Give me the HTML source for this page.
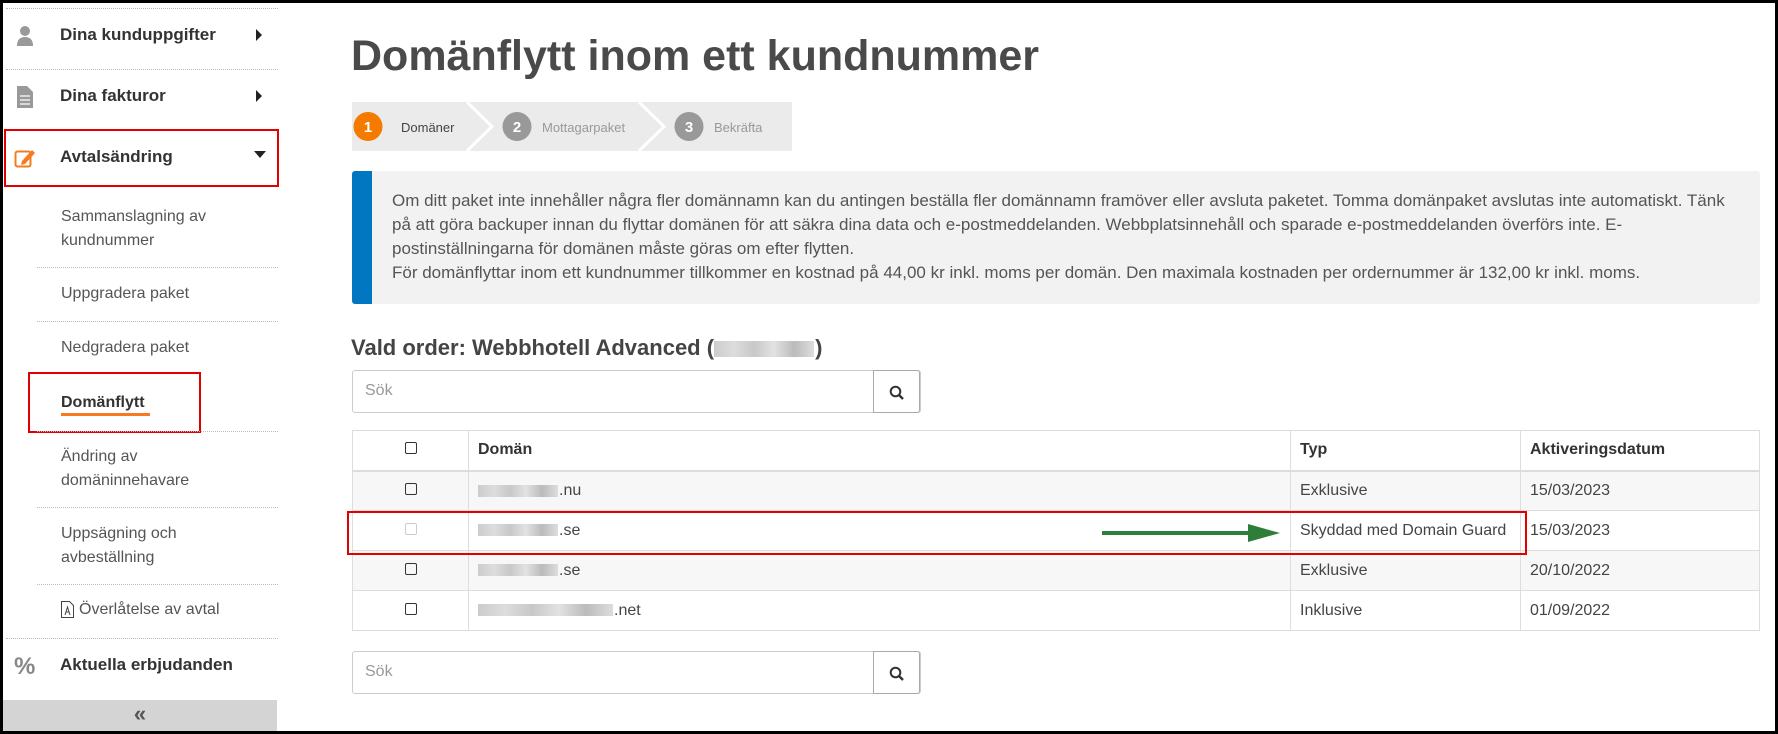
<!DOCTYPE html>
<html><head><meta charset="utf-8"><style>
*{box-sizing:border-box;margin:0;padding:0}
body{width:1778px;height:734px;overflow:hidden;background:#fff;font-family:"Liberation Sans",sans-serif;color:#444;position:relative}
.frame{position:absolute;left:0;top:0;width:1778px;height:734px;border:3px solid #000;z-index:10;pointer-events:none}
.abs{position:absolute}
.side .main{position:absolute;left:60px;font-size:17px;font-weight:bold;color:#333}
.side .sub{position:absolute;left:61px;font-size:16px;color:#555;line-height:24px}
.sep{position:absolute;border-top:1px dotted #bbb;height:0}
.rb{position:absolute;border:2px solid #e00000}
.caret{position:absolute;width:0;height:0}
table{border-collapse:collapse}
td,th{border:1px solid #ddd;font-size:16px;text-align:left;padding:0 9px;height:40px;color:#444}
th{font-weight:bold;color:#333;border-bottom:2px solid #ddd}
tr.g td{background:#f7f7f7}
.cb{display:inline-block;width:12px;height:12px;border:1px solid #333;border-radius:2px}
.blur{display:inline-block;height:12px;background:linear-gradient(90deg,#ccc,#ddd,#c8c8c8,#e2e2e2,#bbb,#ddd);vertical-align:middle;margin-right:1px}
.search{position:absolute;left:352px;width:569px;height:43px;border:1px solid #ccc;border-radius:3px}
.search span{position:absolute;left:12px;top:11px;font-size:16px;color:#999}
.search .btn{position:absolute;right:0;top:-1px;width:47px;height:43px;border:1px solid #aaa;border-radius:0 3px 3px 0;background:#fff}
</style></head><body>
<div class="frame"></div>
<div class="side">
 <div class="sep" style="left:6px;top:8px;width:272px"></div>
 <svg class="abs" style="left:16px;top:25px" width="18" height="22" viewBox="0 0 18 22"><circle cx="9" cy="6" r="5" fill="#999"/><path d="M1 21 Q1 12 9 12 Q17 12 17 21Z" fill="#999"/></svg>
 <div class="main" style="top:25px">Dina kunduppgifter</div>
 <div class="caret" style="left:256px;top:29px;border-left:6px solid #222;border-top:6px solid transparent;border-bottom:6px solid transparent"></div>
 <div class="sep" style="left:6px;top:69px;width:272px"></div>
 <svg class="abs" style="left:17px;top:86px" width="16" height="22" viewBox="0 0 16 22"><path d="M0 0H10L16 6V22H0Z" fill="#999"/><path d="M3 10H13M3 14H13M3 18H13" stroke="#fff" stroke-width="1.2"/></svg>
 <div class="main" style="top:86px">Dina fakturor</div>
 <div class="caret" style="left:256px;top:90px;border-left:6px solid #222;border-top:6px solid transparent;border-bottom:6px solid transparent"></div>
 <div class="rb" style="left:4px;top:129px;width:275px;height:58px"></div>
 <svg class="abs" style="left:14px;top:147px" width="22" height="22" viewBox="0 0 22 22"><rect x="1.5" y="4.5" width="15" height="15" rx="2" fill="none" stroke="#f47b20" stroke-width="2"/><path d="M8 14L18 3L21 6L11 17L7 18Z" fill="#f47b20"/></svg>
 <div class="main" style="top:147px">Avtalsändring</div>
 <div class="caret" style="left:254px;top:151px;border-top:7px solid #222;border-left:6px solid transparent;border-right:6px solid transparent"></div>
 <div class="sub" style="top:205px">Sammanslagning av<br>kundnummer</div>
 <div class="sep" style="left:37px;top:267px;width:241px"></div>
 <div class="sub" style="top:282px">Uppgradera paket</div>
 <div class="sep" style="left:37px;top:321px;width:241px"></div>
 <div class="sub" style="top:336px">Nedgradera paket</div>
 <div class="rb" style="left:28px;top:372px;width:173px;height:61px"></div>
 <div class="sub" style="top:391px;font-weight:bold;color:#333">Domänflytt</div>
 <div class="abs" style="left:61px;top:413px;width:89px;height:3px;background:#f47b20"></div>
 <div class="sep" style="left:37px;top:431px;width:241px"></div>
 <div class="sub" style="top:445px">Ändring av<br>domäninnehavare</div>
 <div class="sep" style="left:37px;top:507px;width:241px"></div>
 <div class="sub" style="top:522px">Uppsägning och<br>avbeställning</div>
 <div class="sep" style="left:37px;top:584px;width:241px"></div>
 <svg class="abs" style="left:61px;top:601px" width="13" height="17" viewBox="0 0 13 17"><path d="M.5 .5H8.5L12.5 4.5V16.5H.5Z" fill="none" stroke="#444"/><path d="M4 14L6.5 6L9 14M5 11H8" stroke="#444" fill="none"/></svg>
 <div class="sub" style="top:598px;left:79px">Överlåtelse av avtal</div>
 <div class="sep" style="left:6px;top:638px;width:272px"></div>
 <div class="abs" style="left:14px;top:653px;font-size:24px;font-weight:bold;color:#888">%</div>
 <div class="main" style="top:655px">Aktuella erbjudanden</div>
 <div class="abs" style="left:3px;top:700px;width:274px;height:31px;background:#d4d4d4;text-align:center;font-size:22px;line-height:28px;color:#555;font-weight:bold">«</div>
</div>

<div class="abs" style="left:351px;top:32px;font-size:43px;font-weight:bold;color:#4a4a4a">Domänflytt inom ett kundnummer</div>

<svg class="abs" style="left:352px;top:102px" width="440" height="49" viewBox="0 0 440 49">
 <rect width="440" height="49" fill="#ebebeb"/>
 <path d="M115 0L140 24.5L115 49" fill="none" stroke="#fff" stroke-width="3"/>
 <path d="M287 0L312 24.5L287 49" fill="none" stroke="#fff" stroke-width="3"/>
 <circle cx="16" cy="24.5" r="14.5" fill="#f47b00"/><text x="16" y="30" font-size="15" font-weight="bold" fill="#fff" text-anchor="middle" font-family="Liberation Sans">1</text>
 <text x="49" y="30" font-size="13" fill="#444" font-family="Liberation Sans">Domäner</text>
 <circle cx="165" cy="24.5" r="14.5" fill="#999"/><text x="165" y="30" font-size="15" font-weight="bold" fill="#fff" text-anchor="middle" font-family="Liberation Sans">2</text>
 <text x="190" y="30" font-size="13" fill="#999" font-family="Liberation Sans">Mottagarpaket</text>
 <circle cx="337" cy="24.5" r="14.5" fill="#999"/><text x="337" y="30" font-size="15" font-weight="bold" fill="#fff" text-anchor="middle" font-family="Liberation Sans">3</text>
 <text x="362" y="30" font-size="13" fill="#999" font-family="Liberation Sans">Bekräfta</text>
</svg>

<div class="abs" style="left:352px;top:171px;width:1408px;height:133px;background:#f2f2f2;border-left:20px solid #0077c0;border-radius:3px;padding:18px 28px 0 20px;font-size:17px;line-height:24px;color:#555">Om ditt paket inte innehåller några fler domännamn kan du antingen beställa fler domännamn framöver eller avsluta paketet. Tomma domänpaket avslutas inte automatiskt. Tänk på att göra backuper innan du flyttar domänen för att säkra dina data och e-postmeddelanden. Webbplatsinnehåll och sparade e-postmeddelanden överförs inte. E-postinställningarna för domänen måste göras om efter flytten.<br>För domänflyttar inom ett kundnummer tillkommer en kostnad på 44,00 kr inkl. moms per domän. Den maximala kostnaden per ordernummer är 132,00 kr inkl. moms.</div>

<div class="abs" style="left:351px;top:335px;font-size:22px;font-weight:bold;color:#444">Vald order: Webbhotell Advanced (<span class="blur" style="width:100px;height:16px"></span>)</div>

<div class="search" style="top:370px"><span>Sök</span><div class="btn"><svg style="position:absolute;left:15px;top:14px" width="16" height="16" viewBox="0 0 16 16"><circle cx="6.5" cy="6.5" r="4.8" fill="none" stroke="#333" stroke-width="2"/><path d="M10 10L14 14" stroke="#333" stroke-width="2.4"/></svg></div></div>

<table class="abs" style="left:352px;top:430px;width:1408px">
<tr><th style="width:116px;text-align:center"><span class="cb"></span></th><th style="width:822px">Domän</th><th style="width:230px">Typ</th><th>Aktiveringsdatum</th></tr>
<tr class="g"><td style="text-align:center"><span class="cb"></span></td><td><span class="blur" style="width:80px"></span>.nu</td><td>Exklusive</td><td>15/03/2023</td></tr>
<tr><td style="text-align:center"><span class="cb" style="border-color:#ccc"></span></td><td><span class="blur" style="width:80px"></span>.se</td><td>Skyddad med Domain Guard</td><td>15/03/2023</td></tr>
<tr class="g"><td style="text-align:center"><span class="cb"></span></td><td><span class="blur" style="width:80px"></span>.se</td><td>Exklusive</td><td>20/10/2022</td></tr>
<tr><td style="text-align:center"><span class="cb"></span></td><td><span class="blur" style="width:135px"></span>.net</td><td>Inklusive</td><td>01/09/2022</td></tr>
</table>
<div class="rb" style="left:347px;top:511px;width:1180px;height:44px"></div>
<svg class="abs" style="left:1100px;top:522px" width="185" height="22" viewBox="0 0 185 22"><path d="M2 11H150" stroke="#2e7d3a" stroke-width="4"/><path d="M148 2L180 11L148 20Z" fill="#2e7d3a"/></svg>

<div class="search" style="top:651px"><span>Sök</span><div class="btn"><svg style="position:absolute;left:15px;top:14px" width="16" height="16" viewBox="0 0 16 16"><circle cx="6.5" cy="6.5" r="4.8" fill="none" stroke="#333" stroke-width="2"/><path d="M10 10L14 14" stroke="#333" stroke-width="2.4"/></svg></div></div>
</body></html>
